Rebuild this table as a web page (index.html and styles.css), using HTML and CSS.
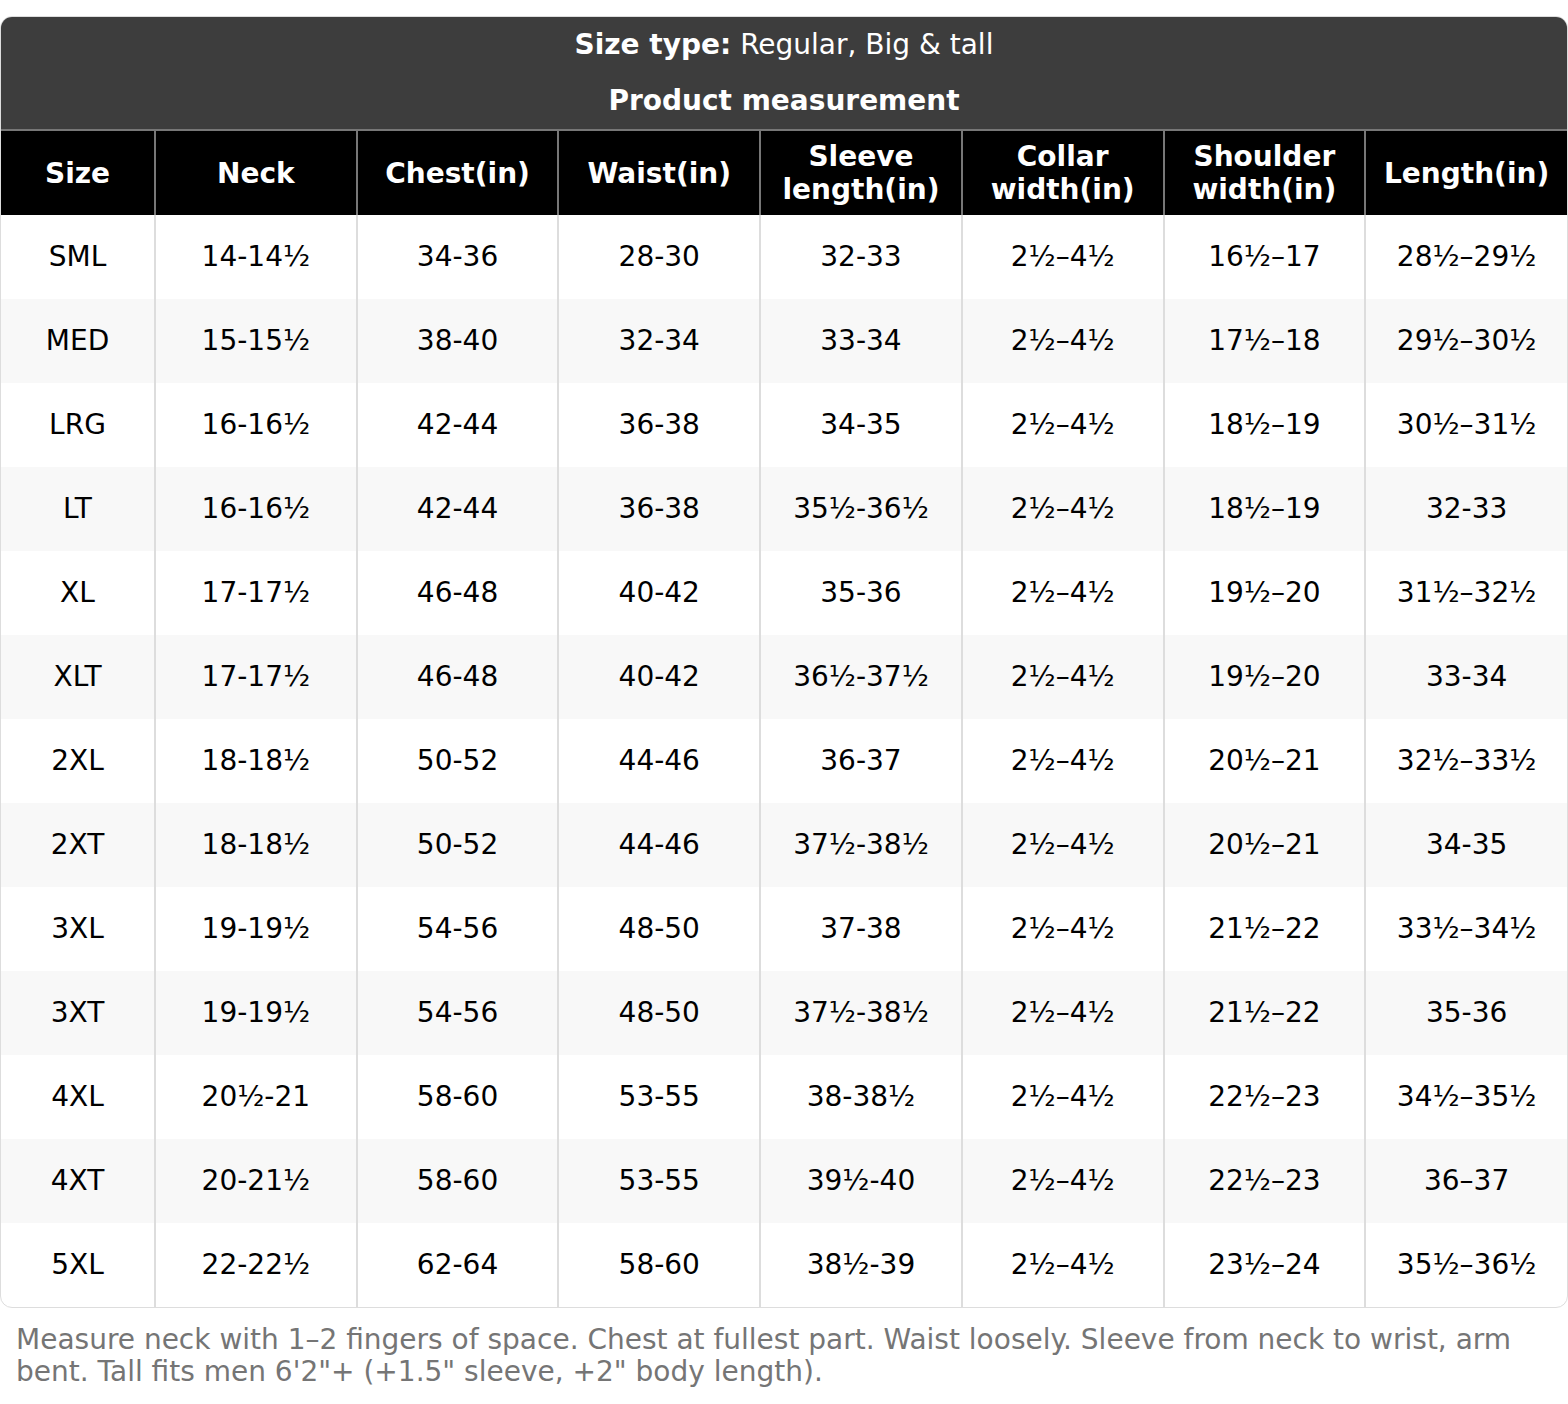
FILE: index.html
```html
<!DOCTYPE html>
<html>
<head>
<meta charset="utf-8">
<link rel="stylesheet" href="styles.css">
</head>
<body>
<div class="page">
  <div class="chart">
    <div class="chart-head">
      <div class="head-line"><strong>Size type:</strong> Regular, Big &amp; tall</div>
      <div class="head-line"><strong>Product measurement</strong></div>
    </div>
    <table class="sizes">
      <colgroup>
        <col class="col-size">
        <col><col><col><col><col><col><col>
      </colgroup>
      <thead>
        <tr>
          <th>Size</th><th>Neck</th><th>Chest(in)</th><th>Waist(in)</th>
          <th>Sleeve<br>length(in)</th><th>Collar<br>width(in)</th><th>Shoulder<br>width(in)</th><th>Length(in)</th>
        </tr>
      </thead>
      <tbody>
        <tr><td>SML</td><td>14-14½</td><td>34-36</td><td>28-30</td><td>32-33</td><td>2½–4½</td><td>16½–17</td><td>28½–29½</td></tr>
        <tr><td>MED</td><td>15-15½</td><td>38-40</td><td>32-34</td><td>33-34</td><td>2½–4½</td><td>17½–18</td><td>29½–30½</td></tr>
        <tr><td>LRG</td><td>16-16½</td><td>42-44</td><td>36-38</td><td>34-35</td><td>2½–4½</td><td>18½–19</td><td>30½–31½</td></tr>
        <tr><td>LT</td><td>16-16½</td><td>42-44</td><td>36-38</td><td>35½-36½</td><td>2½–4½</td><td>18½–19</td><td>32-33</td></tr>
        <tr><td>XL</td><td>17-17½</td><td>46-48</td><td>40-42</td><td>35-36</td><td>2½–4½</td><td>19½–20</td><td>31½–32½</td></tr>
        <tr><td>XLT</td><td>17-17½</td><td>46-48</td><td>40-42</td><td>36½-37½</td><td>2½–4½</td><td>19½–20</td><td>33-34</td></tr>
        <tr><td>2XL</td><td>18-18½</td><td>50-52</td><td>44-46</td><td>36-37</td><td>2½–4½</td><td>20½–21</td><td>32½–33½</td></tr>
        <tr><td>2XT</td><td>18-18½</td><td>50-52</td><td>44-46</td><td>37½-38½</td><td>2½–4½</td><td>20½–21</td><td>34-35</td></tr>
        <tr><td>3XL</td><td>19-19½</td><td>54-56</td><td>48-50</td><td>37-38</td><td>2½–4½</td><td>21½–22</td><td>33½–34½</td></tr>
        <tr><td>3XT</td><td>19-19½</td><td>54-56</td><td>48-50</td><td>37½-38½</td><td>2½–4½</td><td>21½–22</td><td>35-36</td></tr>
        <tr><td>4XL</td><td>20½-21</td><td>58-60</td><td>53-55</td><td>38-38½</td><td>2½–4½</td><td>22½–23</td><td>34½–35½</td></tr>
        <tr><td>4XT</td><td>20-21½</td><td>58-60</td><td>53-55</td><td>39½-40</td><td>2½–4½</td><td>22½–23</td><td>36–37</td></tr>
        <tr><td>5XL</td><td>22-22½</td><td>62-64</td><td>58-60</td><td>38½-39</td><td>2½–4½</td><td>23½–24</td><td>35½–36½</td></tr>
      </tbody>
    </table>
  </div>
  <p class="note">Measure neck with 1–2 fingers of space. Chest at fullest part. Waist loosely. Sleeve from neck to wrist, arm bent. Tall fits men 6'2"+ (+1.5" sleeve, +2" body length).</p>
</div>
</body>
</html>
```
FILE: styles.css
```css
html, body {
  margin: 0;
  padding: 0;
  background: #ffffff;
}
body {
  font-family: "DejaVu Sans", "Liberation Sans", sans-serif;
  font-size: 28px;
  color: #000;
}
.page {
  padding: 16px 0 16px 0;
}
.chart {
  border: 1px solid #dddddd;
  border-radius: 12px;
  overflow: hidden;
}
.chart-head {
  background: #3d3d3d;
  color: #ffffff;
  text-align: center;
  border-bottom: 2px solid #777777;
}
.head-line {
  height: 56px;
  line-height: 55px;
}
.head-line strong {
  font-weight: bold;
}
.sizes {
  width: 100%;
  border-collapse: collapse;
  table-layout: fixed;
}
.col-size {
  width: 154px;
}
.sizes th {
  background: #000000;
  color: #ffffff;
  font-weight: bold;
  line-height: 33px;
  height: 84px;
  padding: 0;
  text-align: center;
  vertical-align: middle;
  border-left: 2px solid #777777;
}
.sizes td {
  height: 84px;
  padding: 0;
  line-height: 32px;
  text-align: center;
  vertical-align: middle;
  border-left: 2px solid #dddddd;
}
.sizes th:first-child,
.sizes td:first-child {
  border-left: none;
}
.sizes tbody tr:nth-child(even) td {
  background: #f8f8f8;
}
.note {
  margin: 16px 0 0 0;
  padding: 0 16px;
  color: #757575;
  line-height: 32px;
}
```
